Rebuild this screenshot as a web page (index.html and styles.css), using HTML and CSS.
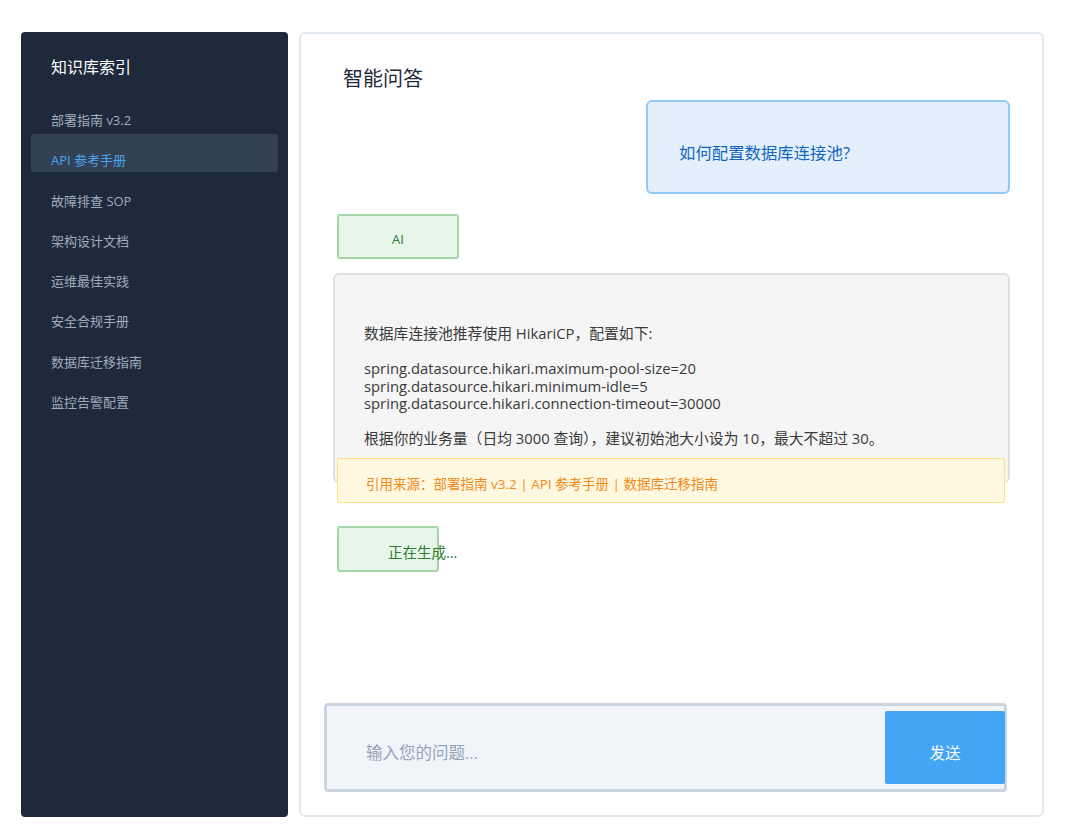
FILE: index.html
```html
<!DOCTYPE html>
<html lang="zh-CN">
<head>
    <meta charset="UTF-8">
    <meta name="viewport" content="width=device-width, initial-scale=1.0">
    <title>知识库问答</title>
    <link rel="stylesheet" href="styles.css">
</head>
<body>

    <div class="app">
        <!-- Sidebar -->
        <aside class="sidebar">
            <h2 class="sidebar-title">知识库索引</h2>
            <ul class="doc-list">
                <li>部署指南 v3.2</li>
                <li class="active">API 参考手册</li>
                <li>故障排查 SOP</li>
                <li>架构设计文档</li>
                <li>运维最佳实践</li>
                <li>安全合规手册</li>
                <li>数据库迁移指南</li>
                <li>监控告警配置</li>
            </ul>
        </aside>

        <!-- Chat Panel -->
        <main class="chat">
            <h1 class="chat-title">智能问答</h1>

            <div class="msg-user">如何配置数据库连接池?</div>

            <div class="ai-tag">AI</div>

            <div class="answer">
                <p class="answer-text">数据库连接池推荐使用 HikariCP，配置如下:

spring.datasource.hikari.maximum-pool-size=20
spring.datasource.hikari.minimum-idle=5
spring.datasource.hikari.connection-timeout=30000

根据你的业务量（日均 3000 查询），建议初始池大小设为 10，最大不超过 30。</p>
                <div class="cite">引用来源：部署指南 v3.2 | API 参考手册 | 数据库迁移指南</div>
            </div>

            <div class="ai-tag generating">正在生成...</div>

            <div class="input-bar">
                <input type="text" placeholder="输入您的问题...">
                <button type="button">发送</button>
            </div>
        </main>
    </div>

</body>
</html>
```

FILE: styles.css
```css
/* General */
* { margin: 0; padding: 0; box-sizing: border-box; }
body { background: #fff; font-family: "Century Gothic", "Open Sans", "Noto Sans CJK SC", sans-serif; color: #333; }

.app { display: flex; gap: 11px; padding: 32px 32px 21px 21px; height: 838px; }

/* Sidebar */
.sidebar { width: 267px; flex-shrink: 0; background: #1e293b; border-radius: 4px; padding: 24px 10px; }
.sidebar-title { font-size: 16px; font-weight: normal; color: #fff; padding-left: 20px; line-height: 22px; margin-bottom: 16px; }
.doc-list { list-style: none; display: flex; flex-direction: column; gap: 2.3px; }
.doc-list li { font-size: 13px; color: #a0acbd; padding: 18px 20px 3px; line-height: 17px; border-radius: 2px; }
.doc-list li.active { background: #334155; color: #4ea3ee; }

/* Chat panel */
.chat { flex: 1; display: flex; flex-direction: column; align-items: flex-start; background: #fff;
    border: 2px solid #e2e8f0; border-radius: 6px; padding: 31px 32px 23px 23px; }
.chat-title { font-size: 20px; font-weight: normal; color: #1e293b; line-height: 28px; margin-left: 19px; }

.msg-user { align-self: flex-end; width: 364px; margin-top: 7px; background: #e3f0fc; border: 2px solid #90caf9;
    border-radius: 6px; padding: 40px 20px 28px 31px; font-size: 16.4px; line-height: 22px; color: #1565c0; }

.ai-tag { margin: 20px 0 0 13px; width: 122px; background: #e8f5e9; border: 2px solid #a5d6a7; border-radius: 3px;
    padding: 15px 49px 9px; font-size: 13px; line-height: 17px; color: #2e7d32; text-align: center; white-space: nowrap; }
.ai-tag.generating { width: 99px; margin-top: 43px; padding-top: 16px; text-align: left; font-size: 14.5px; }

.answer { margin: 14px 0 0 9px; width: 677px; height: 210px; background: #f5f5f5; border: 2px solid #e0e0e0;
    border-radius: 6px; padding: 50px 29px 0; }
.answer-text { white-space: pre-wrap; font-size: 14.8px; line-height: 17.5px; color: #3a3a3a; }
.cite { margin: 10px -26px 0 -27px; background: #fff8e1; border: 1px solid #ffe082; border-radius: 2px;
    padding: 17px 28px 10px; font-size: 13.5px; line-height: 16px; color: #ef8a1a; }

/* Input */
.input-bar { margin-top: auto; width: 683px; height: 89px; display: flex; align-items: center;
    background: #f1f5f9; border: 3px solid #cbd5e1; border-radius: 4px; padding: 5px 0; }
.input-bar input { flex: 1; height: 100%; border: none; outline: none; background: transparent;
    padding: 10px 0 0 39px; font-size: 16.5px; font-family: inherit; color: #333; }
.input-bar input::placeholder { color: #94a3b8; }
.input-bar button { width: 120px; height: 100%; margin-right: -1px; border: none; border-radius: 2px; background: #42a5f5;
    color: #fff; font-size: 15.5px; font-family: inherit; padding-top: 10px; cursor: pointer; }
```
